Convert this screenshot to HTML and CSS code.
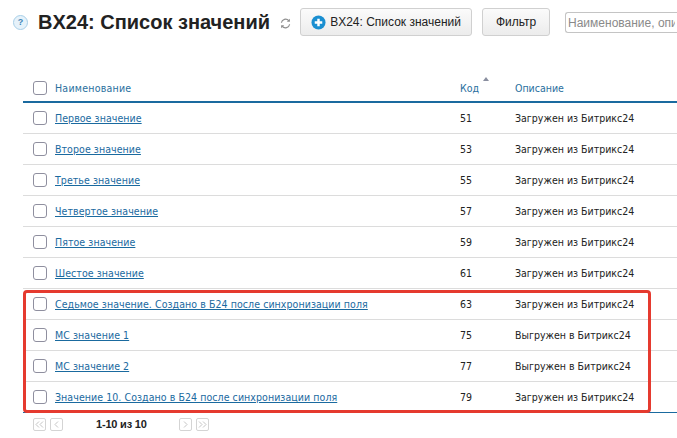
FILE: index.html
```html
<!DOCTYPE html>
<html lang="ru">
<head>
<meta charset="utf-8">
<title>BX24: Список значений</title>
<link rel="stylesheet" href="styles.css">
</head>
<body>
<div class="page">
  <header class="top">
    <span class="help">?</span>
    <h1 class="title">BX24: Список значений</h1>
    <svg class="refresh" width="11" height="11" viewBox="0 0 12 12"><path d="M1.5 5.2A4.6 4.6 0 0 1 9.6 3M10.5 6.8A4.6 4.6 0 0 1 2.4 9" fill="none" stroke="#8e8e8e" stroke-width="1.3"/><path d="M10.8 .8v3.4H7.4zM1.2 11.2V7.8h3.4z" fill="#8e8e8e"/></svg>
    <button class="btn btn-add"><svg width="15" height="15" viewBox="0 0 16 16"><circle cx="8" cy="8" r="7.5" fill="#1a8fd1"/><path d="M8 4v8M4 8h8" stroke="#fff" stroke-width="2.6"/></svg>BX24: Список значений</button>
    <button class="btn btn-filter">Фильтр</button>
    <input class="search" placeholder="Наименование, описание">
  </header>
  <div class="table-wrap">
    <table class="grid">
      <thead>
        <tr><th class="c-check"><span class="box"></span></th><th class="c-name">Наименование</th><th class="c-code"><span class="sort"></span>Код</th><th class="c-desc">Описание</th></tr>
      </thead>
      <tbody>
        <tr><td class="c-check"><span class="box"></span></td><td class="c-name"><a href="#">Первое значение</a></td><td class="c-code">51</td><td class="c-desc">Загружен из Битрикс24</td></tr>
        <tr><td class="c-check"><span class="box"></span></td><td class="c-name"><a href="#">Второе значение</a></td><td class="c-code">53</td><td class="c-desc">Загружен из Битрикс24</td></tr>
        <tr><td class="c-check"><span class="box"></span></td><td class="c-name"><a href="#">Третье значение</a></td><td class="c-code">55</td><td class="c-desc">Загружен из Битрикс24</td></tr>
        <tr><td class="c-check"><span class="box"></span></td><td class="c-name"><a href="#">Четвертое значение</a></td><td class="c-code">57</td><td class="c-desc">Загружен из Битрикс24</td></tr>
        <tr><td class="c-check"><span class="box"></span></td><td class="c-name"><a href="#">Пятое значение</a></td><td class="c-code">59</td><td class="c-desc">Загружен из Битрикс24</td></tr>
        <tr><td class="c-check"><span class="box"></span></td><td class="c-name"><a href="#">Шестое значение</a></td><td class="c-code">61</td><td class="c-desc">Загружен из Битрикс24</td></tr>
        <tr><td class="c-check"><span class="box"></span></td><td class="c-name"><a href="#">Седьмое значение. Создано в Б24 после синхронизации поля</a></td><td class="c-code">63</td><td class="c-desc">Загружен из Битрикс24</td></tr>
        <tr><td class="c-check"><span class="box"></span></td><td class="c-name"><a href="#">МС значение 1</a></td><td class="c-code">75</td><td class="c-desc">Выгружен в Битрикс24</td></tr>
        <tr><td class="c-check"><span class="box"></span></td><td class="c-name"><a href="#">МС значение 2</a></td><td class="c-code">77</td><td class="c-desc">Выгружен в Битрикс24</td></tr>
        <tr class="last"><td class="c-check"><span class="box"></span></td><td class="c-name"><a href="#">Значение 10. Создано в Б24 после синхронизации поля</a></td><td class="c-code">79</td><td class="c-desc">Загружен из Битрикс24</td></tr>
      </tbody>
    </table>
    <div class="highlight"></div>
  </div>
  <nav class="pager">
    <span class="pg"><svg width="9" height="7" viewBox="0 0 9 7"><path d="M4 .5L1 3.5l3 3M8 .5L5 3.5l3 3" fill="none" stroke="#c4c4c4"/></svg></span>
    <span class="pg"><svg width="5" height="7" viewBox="0 0 5 7"><path d="M4 .5L1 3.5l3 3" fill="none" stroke="#c4c4c4"/></svg></span>
    <span class="pg-text">1-10 из 10</span>
    <span class="pg"><svg width="5" height="7" viewBox="0 0 5 7"><path d="M1 .5l3 3-3 3" fill="none" stroke="#c4c4c4"/></svg></span>
    <span class="pg"><svg width="9" height="7" viewBox="0 0 9 7"><path d="M1 .5l3 3-3 3M5 .5l3 3-3 3" fill="none" stroke="#c4c4c4"/></svg></span>
  </nav>
</div>
</body>
</html>
```
FILE: styles.css
```css
html, body { margin: 0; padding: 0; background: #fff; }
body { width: 677px; height: 438px; overflow: hidden; font-family: "DejaVu Sans Condensed", "DejaVu Sans", sans-serif; font-stretch: condensed; font-size: 10.5px; color: #222; }
.page { width: 677px; }
.top { display: flex; align-items: flex-start; height: 74px; padding-left: 13px; white-space: nowrap; }
.help { width: 13px; height: 13px; margin-top: 15px; border: 1px solid #a8cfe8; border-radius: 50%; background: #e6f2fa; color: #3f86b8; font: bold 9px/13px "Liberation Sans", sans-serif; text-align: center; flex: none; }
.title { margin: 7px 0 0 10px; font: bold 20px/30px "Liberation Sans", sans-serif; color: #222; flex: none; }
.refresh { margin: 18px 0 0 10px; flex: none; }
.btn { height: 28px; margin-top: 8px; padding: 0; border: 1px solid #d0d0d0; border-radius: 3px; background: linear-gradient(#fbfbfb, #ececec); font: 12px "Liberation Sans", sans-serif; color: #222; display: flex; align-items: center; justify-content: center; flex: none; }
.btn-add { width: 172px; margin-left: 9px; gap: 4px; }
.btn-filter { width: 68px; margin-left: 10px; }
.search { width: 112px; height: 21px; margin: 12px 0 0 15px; padding: 0 2px; box-sizing: border-box; border: 1px solid #c4c4c4; border-right: 0; border-radius: 3px 0 0 3px; font: 12px "Liberation Sans", sans-serif; flex: none; }
.search::placeholder { color: #8a8a8a; }
.table-wrap { position: relative; margin-left: 23px; width: 654px; }
.grid { width: 654px; table-layout: fixed; border-collapse: collapse; }
.grid th { height: 27px; padding: 0; font-weight: normal; text-align: left; color: #2a6f9e; border-bottom: 2px solid #1a6a9f; }
.grid th.c-name, .grid th.c-code, .grid th.c-desc { padding-top: 1px; height: 26px; }
.grid th.c-name { letter-spacing: 0.25px; }
.grid td { height: 30px; padding: 0; border-bottom: 1px solid #dcdcdc; }
.grid .last td { border-bottom-color: #1a6a9f; }
.c-check { width: 32px; }
.c-name { width: 405px; }
.c-code { width: 55px; position: relative; }
.box { display: block; width: 12px; height: 12px; margin-left: 10px; border: 1px solid #8f8f9f; border-radius: 3px; background: #fff; }
.grid a { color: #1a6a9f; letter-spacing: 0.07px; }
.sort { position: absolute; left: 23px; top: 3px; border: 3px solid transparent; border-bottom: 4px solid #8a8fa0; border-top: 0; }
.highlight { position: absolute; left: 0; top: 216px; width: 622px; height: 117px; border: 3px solid #e53a2f; border-radius: 4px; }
.pager { display: flex; align-items: center; gap: 4px; height: 22px; margin-left: 33px; }
.pg { display: flex; align-items: center; justify-content: center; width: 11px; height: 11px; border: 1px solid #d4d4d4; border-radius: 2px; }
.pg-text { width: 79px; margin-left: 29px; font: bold 11px "Liberation Sans", sans-serif; letter-spacing: -0.2px; }
```
